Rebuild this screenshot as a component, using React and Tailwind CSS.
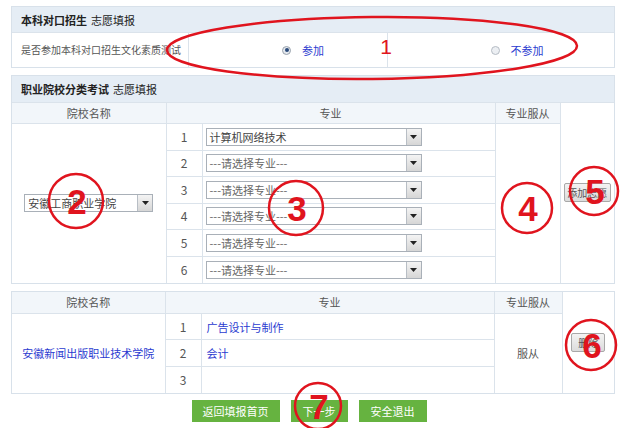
import React from 'react';

const font = { fontFamily: '"Noto Sans CJK SC", "Noto Sans", sans-serif' };

function Select({ value, width = 'w-[216px]', muted }) {
  return (
    <div className={`flex h-[18px] ${width} items-stretch border border-[#a9b0b8] bg-white`}>
      <div className={`flex-1 truncate whitespace-nowrap pl-[3px] text-[11px] leading-[16px] ${muted ? 'text-[#666]' : 'text-[#444]'}`}>{value}</div>
      <div className="flex w-[15px] items-center justify-center border-l border-[#b8bec5] bg-gradient-to-b from-[#f4f4f4] to-[#d6d6d6]">
        <svg width="7" height="4" viewBox="0 0 7 4"><path d="M0 0h7L3.5 4z" fill="#222" /></svg>
      </div>
    </div>
  );
}

function GrayBtn({ children, className = '' }) {
  return (
    <button className={`h-[19px] whitespace-nowrap rounded-[2px] border border-[#a8a8a8] bg-gradient-to-b from-[#f3f3f3] to-[#dcdcdc] text-[10px] leading-[15px] text-[#555] ${className}`}>
      {children}
    </button>
  );
}

const majors = ['计算机网络技术', '---请选择专业---', '---请选择专业---', '---请选择专业---', '---请选择专业---', '---请选择专业---'];

function Annotations() {
  const red = '#e0141e';
  const circles = [
    { n: '2', cx: 76, cy: 201, r: 27 },
    { n: '3', cx: 296, cy: 208, r: 27 },
    { n: '4', cx: 527, cy: 208, r: 25 },
    { n: '5', cx: 594, cy: 191, r: 24 },
    { n: '6', cx: 591, cy: 345, r: 25 },
    { n: '7', cx: 318, cy: 406, r: 23 },
  ];
  return (
    <svg className="pointer-events-none absolute left-0 top-0" width="629" height="428" viewBox="0 0 629 428">
      <ellipse cx="372" cy="48" rx="205" ry="31" fill="none" stroke={red} strokeWidth="2.5" transform="rotate(-0.6 372 48)" />
      <text x="386" y="54" textAnchor="middle" fontSize="21" fill={red} fontFamily="Liberation Sans, sans-serif">1</text>
      {circles.map((c) => (
        <g key={c.n}>
          <circle cx={c.cx} cy={c.cy} r={c.r} fill="none" stroke={red} strokeWidth="2.5" />
          <text x={c.cx + 1} y={c.cy + 12.5} textAnchor="middle" fontSize="35" fontWeight="bold" fill={red} fontFamily="Liberation Sans, sans-serif">{c.n}</text>
        </g>
      ))}
    </svg>
  );
}

export default function App() {
  const cell = 'border border-[#dbe3eb]';
  return (
    <div className="relative h-[428px] w-[629px] overflow-hidden bg-white leading-[14px]" style={font}>
      <div className="flex flex-col pl-[11px] pt-[6px]">
        {/* 本科对口招生 */}
        <div className="w-[604px] border border-[#d8e1ea]">
          <div className="flex h-[25px] items-center bg-[#e5edf5] pl-[9px] text-[11px] text-[#222]">
            <span className="font-bold">本科对口招生</span>
            <span className="ml-[4px]">志愿填报</span>
          </div>
          <div className="grid h-[35px] grid-cols-[177px_199px_1fr] border-t border-[#dbe3eb] bg-white text-[11px]">
            <div className="flex items-center whitespace-nowrap border-r border-[#dbe3eb] pl-[9px] text-[10px] text-[#555]">是否参加本科对口招生文化素质测试</div>
            <div className="flex items-center justify-center gap-[11px] border-r border-[#dbe3eb] pl-[30px]">
              <span className="flex h-[9px] w-[9px] items-center justify-center rounded-full border border-[#9aa3ad] bg-[#e4e8ee]">
                <span className="h-[4px] w-[4px] rounded-full bg-[#2a4a7a]" />
              </span>
              <span className="text-[#2b3bd0]">参加</span>
            </div>
            <div className="flex items-center justify-center gap-[11px] pl-[32px]">
              <span className="h-[9px] w-[9px] rounded-full border border-[#b5bcc4] bg-[#eceff3]" />
              <span className="text-[#2b3bd0]">不参加</span>
            </div>
          </div>
        </div>

        {/* 职业院校分类考试 */}
        <div className="mt-[7px] w-[604px] border border-[#d8e1ea]">
          <div className="flex h-[26px] items-center bg-[#e5edf5] pl-[9px] text-[11px] text-[#222]">
            <span className="font-bold">职业院校分类考试</span>
            <span className="ml-[4px]">志愿填报</span>
          </div>
          <table className="w-full table-fixed border-collapse text-[11px] text-[#555]">
            <colgroup>
              <col className="w-[154px]" />
              <col className="w-[36px]" />
              <col className="w-[293px]" />
              <col className="w-[65px]" />
              <col />
            </colgroup>
            <tbody>
              <tr className="h-[21px] bg-[#f2f6fa]">
                <td className={`${cell} border-l-0 text-center`}>院校名称</td>
                <td colSpan={2} className={`${cell} text-center`}>专业</td>
                <td className={`${cell} text-center`}>专业服从</td>
                <td rowSpan={7} className={`${cell} border-r-0 border-b-0 bg-white align-middle`}>
                  <div className="flex justify-center">
                    <GrayBtn className="w-[47px]">添加志愿</GrayBtn>
                  </div>
                </td>
              </tr>
              {majors.map((m, i) => (
                <tr key={i} className="h-[26.5px] bg-white">
                  {i === 0 && (
                    <td rowSpan={6} className={`${cell} border-l-0 border-b-0 align-middle`}>
                      <div className="flex justify-center">
                        <Select value="安徽工商职业学院" width="w-[129px]" />
                      </div>
                    </td>
                  )}
                  <td className={`${cell} text-center text-[12px] ${i === 5 ? 'border-b-0' : ''}`}>{i + 1}</td>
                  <td className={`${cell} pl-[3px] ${i === 5 ? 'border-b-0' : ''}`}>
                    <Select value={m} muted={i > 0} />
                  </td>
                  {i === 0 && <td rowSpan={6} className={`${cell} border-b-0`} />}
                </tr>
              ))}
            </tbody>
          </table>
        </div>

        {/* 已填志愿 */}
        <div className="mt-[7px] w-[604px] border border-[#d8e1ea]">
          <table className="w-full table-fixed border-collapse text-[11px] text-[#555]">
            <colgroup>
              <col className="w-[153px]" />
              <col className="w-[36px]" />
              <col className="w-[293px]" />
              <col className="w-[68px]" />
              <col />
            </colgroup>
            <tbody>
              <tr className="h-[22px] bg-[#f2f6fa]">
                <td className={`${cell} border-l-0 border-t-0 text-center`}>院校名称</td>
                <td colSpan={2} className={`${cell} border-t-0 text-center`}>专业</td>
                <td className={`${cell} border-t-0 text-center`}>专业服从</td>
                <td rowSpan={4} className={`${cell} border-r-0 border-b-0 border-t-0 bg-white align-middle`}>
                  <div className="flex justify-center">
                    <GrayBtn className="w-[34px]">删除</GrayBtn>
                  </div>
                </td>
              </tr>
              <tr className="h-[26px] bg-white">
                <td rowSpan={3} className={`${cell} border-l-0 border-b-0 text-center text-[#2b3bd0]`}>安徽新闻出版职业技术学院</td>
                <td className={`${cell} text-center text-[12px]`}>1</td>
                <td className={`${cell} pl-[5px] text-[#2b3bd0]`}>广告设计与制作</td>
                <td rowSpan={3} className={`${cell} border-b-0 text-center`}>服从</td>
              </tr>
              <tr className="h-[27px] bg-white">
                <td className={`${cell} text-center text-[12px]`}>2</td>
                <td className={`${cell} pl-[5px] text-[#2b3bd0]`}>会计</td>
              </tr>
              <tr className="h-[26px] bg-white">
                <td className={`${cell} border-b-0 text-center text-[12px]`}>3</td>
                <td className={`${cell} border-b-0`} />
              </tr>
            </tbody>
          </table>
        </div>

        {/* 按钮 */}
        <div className="mt-[6px] flex w-[604px] justify-center gap-[11px] pr-[8px] text-[11px] text-white">
          <button className="h-[22px] w-[88px] bg-[#66b340]">返回填报首页</button>
          <button className="h-[22px] w-[57px] bg-[#66b340]">下一步</button>
          <button className="h-[22px] w-[68px] bg-[#66b340]">安全退出</button>
        </div>
      </div>
      <Annotations />
    </div>
  );
}
